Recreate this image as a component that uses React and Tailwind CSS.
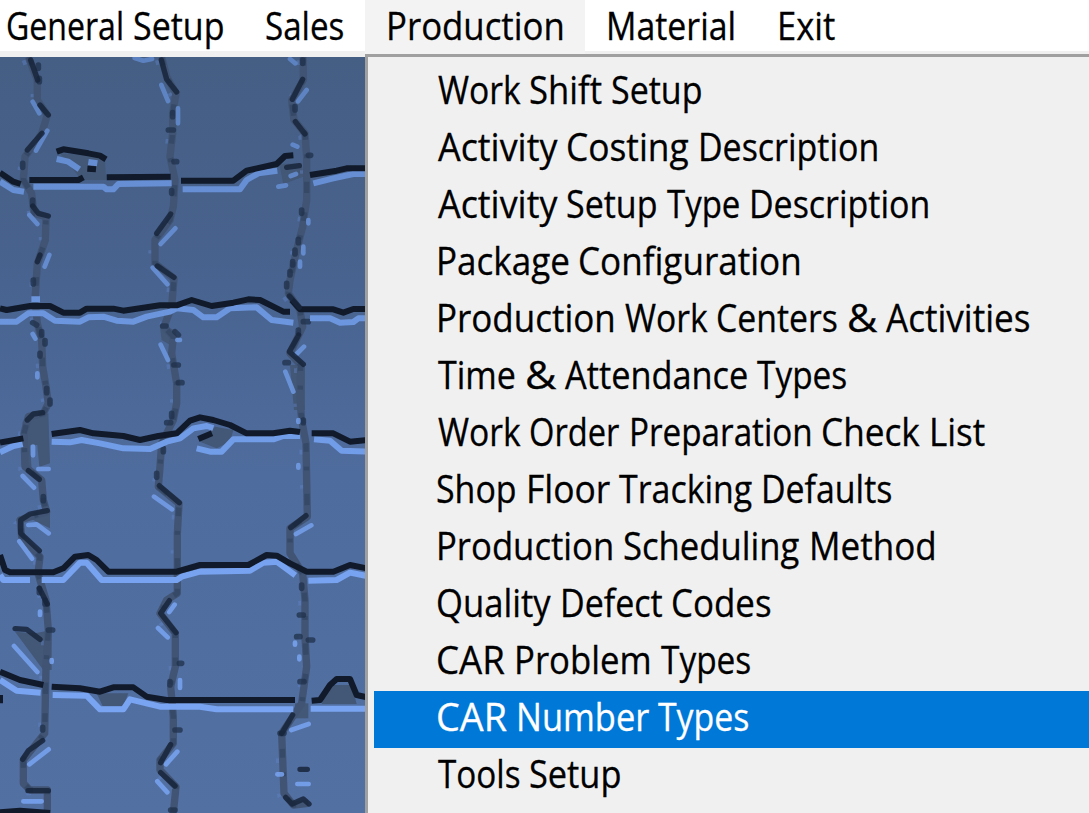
import { useLayoutEffect, useRef } from "react";

// stops: left edge of every word, then the right edge of the last one
const menuBar = [
    { label: "General Setup", box: "w-[244px] pl-[7px]", stops: [0, 127, 217] },
    { label: "Sales", box: "w-[121px] pl-[22px]", stops: [0, 78] },
    { label: "Production", box: "w-[220px] pl-[22px]", stops: [0, 177], open: true },
    { label: "Material", box: "w-[171px] pl-[22px]", stops: [0, 128] },
    { label: "Exit", box: "w-[100px] pl-[22px]", stops: [0, 56] },
];

const menuItems = [
    { label: "Work Shift Setup", stops: [0, 93, 175, 265] },
    { label: "Activity Costing Description", stops: [0, 130, 262, 441] },
    { label: "Activity Setup Type Description", stops: [0, 130, 229, 313, 492] },
    { label: "Package Configuration", stops: [0, 142, 364] },
    { label: "Production Work Centers & Activities", stops: [0, 187, 280, 409, 448, 592] },
    { label: "Time & Attendance Types", stops: [0, 87, 127, 319, 409] },
    { label: "Work Order Preparation Check List", stops: [0, 93, 193, 385, 493, 547] },
    { label: "Shop Floor Tracking Defaults", stops: [0, 90, 181, 325, 454] },
    { label: "Production Scheduling Method", stops: [0, 187, 373, 499] },
    { label: "Quality Defect Codes", stops: [0, 124, 235, 334] },
    { label: "CAR Problem Types", stops: [0, 78, 223, 313] },
    { label: "CAR Number Types", stops: [0, 80, 220, 311], selected: true },
    { label: "Tools Setup", stops: [0, 93, 184] },
];

// Horizontal cracks: dark upper edge
const darkCracks = [
    "M0 518L40 545L62 552",
    "M88 540H235L250 532M320 532L512 530",
    "M543 542H700L740 512L830 492L855 468L880 466",
    "M930 525L1010 512L1040 505H1100",
    "M170 455L190 448L265 460L300 467L318 478M262 506L288 508",
    "M0 925L20 930L90 918H150L190 938H240L260 926H340L370 932L440 922L480 916H530L575 900L635 918L700 908L745 898L780 900L850 935H870",
    "M875 900L900 928H1000L1030 938L1060 927H1100",
    "M0 1328L70 1315M155 1302L240 1290L280 1300L370 1308L420 1320L475 1308L530 1300L570 1262L600 1252L640 1260L690 1275L740 1300H820L870 1292L900 1296",
    "M935 1300H1000L1050 1325L1100 1320M595 1317L636 1300",
    "M0 1665L15 1710L30 1717H160L190 1705L225 1670L265 1665L290 1680L325 1715H530L600 1695H745L800 1665L830 1667L870 1690L920 1715H1000L1050 1695L1100 1705",
    "M0 2015L60 2040L130 2055M155 2060L240 2065L300 2075L340 2062H400L440 2090L500 2100H885M935 2102L960 2100L990 2055L1010 2037H1050L1070 2085L1100 2092",
    "M0 2437L60 2432L150 2439M0 2085V2110",
];

// Horizontal cracks: lit lower edge
const lightCracks = [
    "M0 545L40 570L72 575M100 560H310L320 568H340L355 552L515 550",
    "M548 568H720L740 540L775 520L832 512M940 550L1000 535L1060 522H1100",
    "M170 477L205 485L238 508M265 486L292 490",
    "M0 965H50L85 940H130L165 962L240 965L265 952L310 950L350 962L400 965L440 950L510 935L530 925L580 930L610 952H650L690 925L770 922L815 960L880 968",
    "M930 955H990L1020 968L1060 966L1075 955H1100M94 898H120",
    "M0 1357L40 1338L68 1332M155 1325L210 1327L245 1320L300 1330L370 1345L450 1347L500 1325L540 1315L580 1285L620 1278L640 1284",
    "M590 1345L630 1355H665L700 1318H820L850 1308H900M942 1318L990 1322L1025 1352L1100 1355",
    "M0 1725L10 1740H90M125 1740H190L240 1688H260L305 1740H530L545 1730L600 1715L750 1712L790 1688L830 1685L886 1726",
    "M925 1742L1010 1740L1050 1718L1100 1728",
    "M0 2040L50 2072L122 2078M158 2085L260 2087L300 2128H370L390 2098L480 2120H600L650 2128H880M932 2126H1100",
];

// Vertical cracks, top to bottom
const seams = [
    "M85 171L112 240V300L142 345L125 400L75 470L70 540L95 580L102 640L138 650L136 720L112 790L105 900L112 970L125 1020L128 1100L138 1160L145 1210L130 1240L85 1250L72 1300L75 1400L125 1440L130 1500L140 1535L60 1560L65 1610L120 1670L114 1720L138 1800L145 1890L138 2000L134 2200L70 2280V2350L90 2370H142V2439",
    "M485 171L500 230L528 280L518 340V400L510 470L525 540L520 620L510 660L465 720V790L522 835L515 920L492 980L520 1010L515 1060L530 1150L530 1210L520 1260L485 1330L480 1400L475 1460L537 1510L532 1600V1780L500 1800L480 1840L526 1900V2000L512 2060L520 2150V2230L480 2280V2310L528 2360L520 2439",
    "M910 171V240L875 300L882 360L915 400L920 470V600L908 680L890 750L870 840L865 880L900 930L908 980L870 1060L902 1095L900 1200L905 1260L918 1330L922 1550L870 1585V1660L908 1720L915 1800V1910L920 2000L905 2110L845 2200L852 2380L880 2415L925 2410",
];

// Deep shadow where the vertical cracks bend
const seamShadows = [
    "M92 180L113 240M120 315L145 345M126 400L82 450M98 618L115 640L145 648M120 765L112 785",
    "M82 1260L100 1242L128 1238M85 1412L118 1438M142 1532L90 1542L62 1560V1600L118 1652M118 1765L142 1812",
    "M45 1886L80 1888L120 1918M128 2222L85 2252L68 2278M84 2372H145",
    "M484 180L500 238L530 276M512 642L470 700M472 798L522 832M478 1457L538 1508M508 1802L482 1840L528 1898M512 2234L482 2288M482 2318L525 2358",
    "M908 238L877 298M886 365L915 402M860 502L898 497M868 888L898 922M896 1005L868 1055L910 1093M918 1547L872 1583M878 2145L845 2200M900 2308H922M857 2392L876 2412L910 2397L927 2412",
];

// Small dark crumbs scattered along the seams
const crumbs = [
    "M115 195V205M118 235V245M68 490V502M98 600V615M100 840V852M98 968L110 975M125 995V1005M135 1022V1032M120 1060V1068M140 1165V1178M150 1200V1212M130 1490V1502M118 1765V1778M135 1800V1812M145 1890H158M128 2182V2190",
    "M518 338V350M505 390H520M522 485H530M515 572V580M488 978H498M525 995L535 1005M522 1095H535M535 1148H546M515 1240V1250M500 1268H512M490 1345V1355M470 1420V1432M538 1990H545M510 2045V2055M525 2190H540M512 2430H525",
    "M908 180V190M885 320V330M925 466H932M905 630V640M895 718V728M885 750V762M878 785V795M870 815V825M860 850V860M910 965H925M895 990V1000M855 1088H865M910 1260V1268M905 1755V1765M898 1845H910M890 1910H900M925 1920H938M900 2045H912M840 2200H852",
];

// Highlights next to those bends
const seamLights = [
    "M98 305L118 340M142 392L108 452M88 645L112 672M148 765L134 800M98 1002L106 1016M112 1120V1132",
    "M99 1340V1366M115 1407H146M68 1428L102 1463M85 1575L110 1573L146 1600M58 1624L96 1676M42 1938L112 2016M146 2248L88 2293M70 2404H125M155 1980V1986M120 1835V1845",
    "M404 174L430 182L456 177M484 255L504 303M526 685L482 732M458 803L502 853M482 1034L504 1080M462 1490L516 1528M524 1814L508 1836M474 1884L503 1912M532 2255L498 2293M472 2344L502 2377M532 1020H540M534 325V370M540 2040V2064",
    "M870 177L886 190M920 270L894 304M878 434L892 440M835 560L858 556M872 528L888 522M912 1040L890 1062M856 1115L880 1175M888 1602L934 1576M874 2190L926 2172M892 2352H926M832 2323H846M925 660V670M910 740V760M900 785V800M895 1260V1266M895 1395V1403M885 1928V1934M898 1970V1978",
];

const pits = [
    "M180 460L265 465L315 482L318 540H245Z",
    "M838 492L905 490L910 530L850 552Z",
    "M600 1325L645 1280L700 1290L690 1325L650 1345Z",
    "M68 1265L145 1240L150 1390L118 1400L112 1335H90L95 1410L65 1395Z",
    "M45 1895L105 1900L155 1890V2010H130Z",
    "M290 2080L385 2080L370 2118H308Z",
    "M990 2055L1055 2055L1070 2112H965Z",
    "M870 1095H915V1230H882Z",
    "M90 1555L150 1535V1585L110 1565Z",
    "M885 2110H925V2155H885Z",
    "M480 980L530 990L520 1040L485 1020Z",
];

function Wallpaper() {
    return (
        <svg className="block h-[756px] w-[365px]" viewBox="0 171 1095 2268" fill="none" strokeLinejoin="round">
            <defs>
                <linearGradient id="wall" gradientUnits="userSpaceOnUse" x1="0" y1="171" x2="0" y2="2439">
                    <stop offset="0" stopColor="#455e84" />
                    <stop offset="0.3" stopColor="#48638f" />
                    <stop offset="0.55" stopColor="#4f6c9e" />
                    <stop offset="1" stopColor="#5370a3" />
                </linearGradient>
                <linearGradient id="lit" gradientUnits="userSpaceOnUse" x1="0" y1="171" x2="0" y2="1800">
                    <stop offset="0" stopColor="#6088cb" />
                    <stop offset="1" stopColor="#78a4f2" />
                </linearGradient>
            </defs>
            <rect y="171" width="1095" height="2268" fill="url(#wall)" />
            {pits.map((d) => <path key={d} d={d} fill="#435777" />)}
            {seams.map((d) => (
                <g key={d}>
                    <path d={d} transform="translate(-14 10)" stroke="#6288cc" strokeWidth="12" strokeDasharray="14 92 10 130" opacity="0.4" />
                    <path d={d} stroke="#415474" strokeWidth="22" />
                    <path d={d} stroke="#2c3f5c" strokeWidth="16" strokeDasharray="26 44 12 70 34 58" opacity="0.5" />
                </g>
            ))}
            {crumbs.map((d) => <path key={d} d={d} stroke="#1f304a" strokeWidth="17" strokeLinecap="round" opacity="0.75" />)}
            {lightCracks.map((d) => <path key={d} d={d} stroke="url(#lit)" strokeWidth="18" />)}
            {seamLights.map((d) => <path key={d} d={d} stroke="url(#lit)" strokeWidth="14" strokeLinecap="round" opacity="0.85" />)}
            {darkCracks.map((d) => <path key={d} d={d} stroke="#101a2a" strokeWidth="18" />)}
            {seamShadows.map((d) => <path key={d} d={d} stroke="#17253b" strokeWidth="16" strokeLinecap="round" opacity="0.85" />)}
        </svg>
    );
}

const SPACE = 9;

// Side bearing of a capital, so that its ink lands on the stop
function bearing(letter) {
    if ("PDFLMNE".includes(letter)) return -1.5;
    if ("CSOQG".includes(letter)) return -1;
    return 0.5;
}

function Word({ text, width, offset, last }) {
    const ref = useRef(null);

    useLayoutEffect(() => {
        const el = ref.current;
        el.style.transform = `scaleX(${width / el.offsetWidth})`;
    }, [text, width]);

    return (
        <span className="inline-block whitespace-pre" style={{ width: width + SPACE, marginLeft: offset }}>
            <span ref={ref} className="inline-block origin-left">{text}</span>
            {last ? "" : " "}
        </span>
    );
}

function Label({ text, stops }) {
    const words = text.split(" ");
    const origins = words.map((word, i) => stops[i] + bearing(word[0]));
    const end = stops[words.length] + 0.5 + SPACE;

    return (
        <span className="whitespace-nowrap">
            {words.map((word, i) => (
                <Word
                    key={i}
                    text={word}
                    width={(origins[i + 1] ?? end) - origins[i] - SPACE}
                    offset={i === 0 ? origins[0] : 0}
                    last={i === words.length - 1}
                />
            ))}
        </span>
    );
}

export default function App() {
    return (
        <div className="flex h-[813px] w-[1089px] flex-col overflow-hidden bg-[#f0f0f0] font-['Open_Sans','Noto_Sans',sans-serif] text-[37.5px] leading-[51px] text-black [-webkit-text-stroke:0.3px]">
            {/* Menu bar */}
            <nav className="flex h-[54px] shrink-0 border-b-[3px] border-[#f0f0f0] bg-white">
                {menuBar.map((item) => (
                    <div key={item.label} className={`h-[54px] shrink-0 ${item.box} ${item.open ? "bg-[#f3f3f3]" : ""}`}>
                        <Label text={item.label} stops={item.stops} />
                    </div>
                ))}
            </nav>

            <div className="flex min-h-0 flex-1">
                <div className="w-[365px] shrink-0 border-t-[3px] border-[#f0f0f0]">
                    <Wallpaper />
                </div>

                {/* Production dropdown */}
                <ul className="flex-1 border-t-[3px] border-l-[3px] border-[#a0a0a0] pt-[7px] pl-[6px]">
                    {menuItems.map((item) => (
                        <li
                            key={item.label}
                            className={`h-[57px] pl-[63px] leading-[51px] ${item.selected ? "bg-[#0078d7] text-white" : ""}`}
                        >
                            <Label text={item.label} stops={item.stops} />
                        </li>
                    ))}
                </ul>
            </div>
        </div>
    );
}
